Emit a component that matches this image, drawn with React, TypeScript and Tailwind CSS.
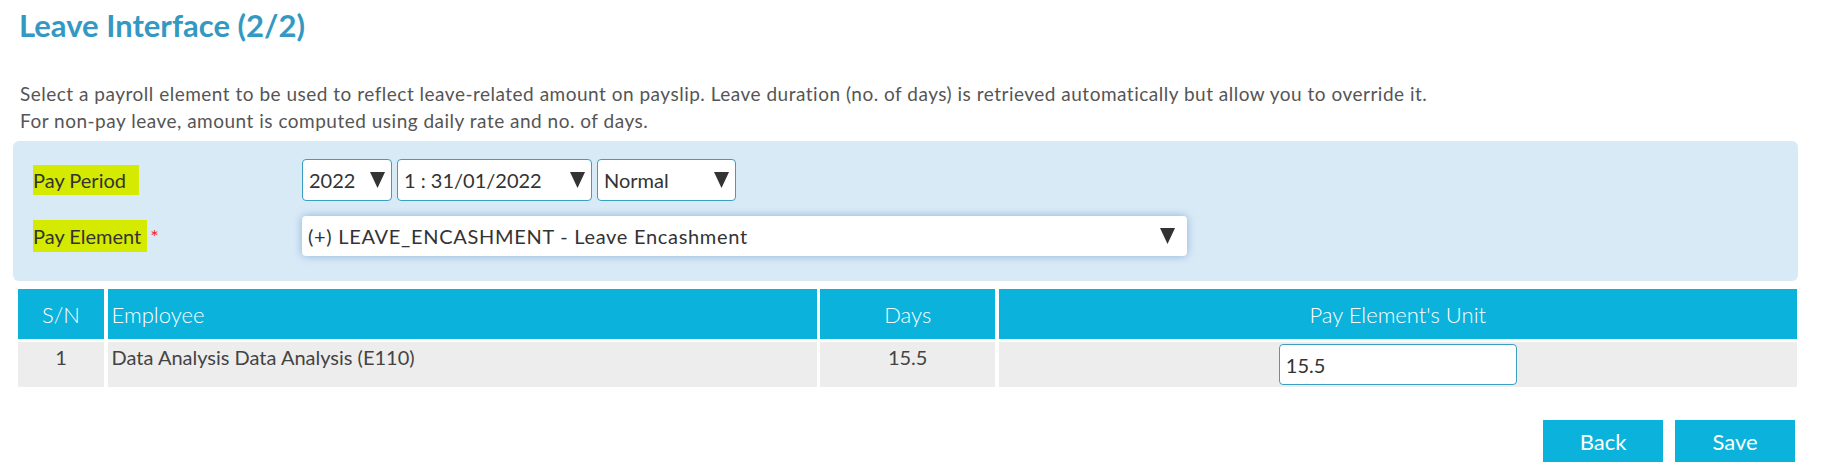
import React from "react";

const font = { fontFamily: "Lato, 'Open Sans', 'Liberation Sans', sans-serif" };

function Arrow() {
  return (
    <svg width="15" height="18" viewBox="0 0 15 18" className="shrink-0">
      <polygon points="0,1 15,1 7.5,17" fill="#333" />
    </svg>
  );
}

function Select({ w, text }: { w: string; text: string }) {
  return (
    <div
      className={`${w} h-[42px] flex items-center justify-between pl-[6px] pr-[6px] bg-white border border-[#3a9fc0] rounded-[4px] text-[20px] text-[#333]`}
    >
      <span>{text}</span>
      <Arrow />
    </div>
  );
}

export default function App() {
  return (
    <div className="w-[1830px] h-[468px] bg-white overflow-hidden" style={font}>
      <div className="pl-[19px] pt-[5px]">
        <h1 className="text-[31px] font-bold text-[#3399c3] leading-[40px]">Leave Interface (2/2)</h1>
      </div>
      <p className="pl-[20px] mt-[35px] text-[19px] tracking-[0.5px] leading-[27px] text-[#555]">
        Select a payroll element to be used to reflect leave-related amount on payslip. Leave duration (no. of days) is retrieved automatically but allow you to override it.
        <br />
        For non-pay leave, amount is computed using daily rate and no. of days.
      </p>
      <div className="ml-[13px] mt-[7px] w-[1785px] h-[140px] bg-[#d9eaf7] rounded-[6px] pt-[18px] pl-[20px] flex flex-col gap-[15px]">
        <div className="flex items-center h-[42px]">
          <div className="w-[269px] text-[20px] text-[#333]">
            <span className="bg-[#d4ea00] pr-[13px] py-[3px]">Pay Period</span>
          </div>
          <div className="flex gap-[5px]">
            <Select w="w-[90px]" text="2022" />
            <Select w="w-[195px]" text="1 : 31/01/2022" />
            <Select w="w-[139px]" text="Normal" />
          </div>
        </div>
        <div className="flex items-center h-[40px]">
          <div className="w-[269px] text-[20px] text-[#333]">
            <span className="bg-[#d4ea00] pr-[6px] py-[4px]">Pay Element</span>
            <span className="text-[#ff2020] ml-[3px]">*</span>
          </div>
          <div className="w-[885px] h-[40px] bg-white rounded-[4px] shadow-[0_0_8px_rgba(80,130,190,0.55)] flex items-center justify-between pl-[6px] pr-[12px] text-[20px] text-[#333]">
            <span className="tracking-[0.7px]">(+) LEAVE_ENCASHMENT - Leave Encashment</span>
            <Arrow />
          </div>
        </div>
      </div>
      <div className="ml-[18px] mt-[8px] w-[1779px] grid grid-cols-[86px_709px_175px_798px] gap-x-[3.6px] gap-y-[3px]">
        <div className="h-[50px] bg-[#0ab2dc] text-white font-light text-[22px] flex items-end justify-center pb-[8px]">S/N</div>
        <div className="h-[50px] bg-[#0ab2dc] text-white font-light text-[22px] flex items-end pl-[4px] pb-[8px]">Employee</div>
        <div className="h-[50px] bg-[#0ab2dc] text-white font-light text-[22px] flex items-end justify-center pb-[8px]">Days</div>
        <div className="h-[50px] bg-[#0ab2dc] text-white font-light text-[22px] flex items-end justify-center pb-[8px]">Pay Element's Unit</div>
        <div className="h-[45px] bg-[#ededed] text-[#444] text-[20px] flex justify-center pt-0">1</div>
        <div className="h-[45px] bg-[#ededed] text-[#444] text-[20px] pl-[4px] pt-0">Data Analysis Data Analysis (E110)</div>
        <div className="h-[45px] bg-[#ededed] text-[#444] text-[20px] flex justify-center pt-0">15.5</div>
        <div className="h-[45px] bg-[#ededed] flex justify-center items-center">
          <div className="w-[238px] h-[41px] bg-white border border-[#3a9fc0] rounded-[4px] flex items-center pl-[6px] text-[20px] text-[#333]">15.5</div>
        </div>
      </div>
      <div className="flex justify-end gap-[12px] mt-[33px] w-[1795px]">
        <button className="w-[120px] h-[42px] bg-[#0ab2dc] text-white text-[22px]">Back</button>
        <button className="w-[120px] h-[42px] bg-[#0ab2dc] text-white text-[22px]">Save</button>
      </div>
    </div>
  );
}
